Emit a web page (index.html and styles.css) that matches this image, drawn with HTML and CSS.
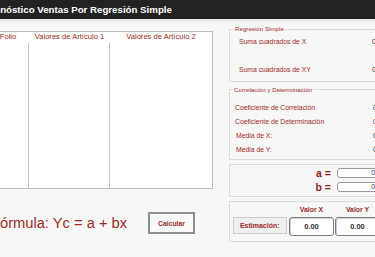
FILE: index.html
```html
<!DOCTYPE html>
<html lang="es">
<head>
<meta charset="utf-8">
<title>Pronóstico Ventas</title>
<link rel="stylesheet" href="styles.css">
</head>
<body>
<div class="page">
  <div class="titlebar">Pronóstico Ventas Por Regresión Simple</div>
  <div class="strip"></div>
  <div class="main">
    <div class="left">
      <div class="table">
        <div class="thead">
          <div>Folio</div>
          <div>Valores de Artículo 1</div>
          <div>Valores de Artículo 2</div>
        </div>
        <div class="tbody">
          <div class="col"></div>
          <div class="col"></div>
          <div class="col last"></div>
        </div>
      </div>
      <div class="formula-row">
        <span class="formula">Fórmula: Yc = a + bx</span>
        <button class="btn-calc">Calcular</button>
      </div>
    </div>
    <div class="right">
      <fieldset class="fs fs1">
        <legend>Regresión Simple</legend>
        <div class="row r1"><span class="lbl">Suma cuadrados de X</span><span class="val">0</span></div>
        <div class="row r2"><span class="lbl">Suma cuadrados de XY</span><span class="val">0</span></div>
      </fieldset>
      <fieldset class="fs fs2">
        <legend>Correlación y Determinación</legend>
        <div class="row c1"><span class="lbl">Coeficiente de Correlación</span><span class="val">0</span></div>
        <div class="row c2"><span class="lbl">Coeficiente de Determinación</span><span class="val">0</span></div>
        <div class="row c3"><span class="lbl media">Media de X:</span><span class="val">0</span></div>
        <div class="row c3"><span class="lbl media">Media de Y:</span><span class="val">0</span></div>
      </fieldset>
      <div class="box box-ab">
        <div class="ab-row"><span class="ab-lbl">a =</span><span class="ab-input">0</span></div>
        <div class="ab-row"><span class="ab-lbl">b =</span><span class="ab-input">0</span></div>
      </div>
      <div class="box box-est">
        <div class="est-head"><span class="sp"></span><span class="vh">Valor X</span><span class="vh">Valor Y</span></div>
        <div class="est-row">
          <button class="btn-est">Estimación:</button>
          <span class="est-input">0.00</span>
          <span class="est-input">0.00</span>
        </div>
      </div>
    </div>
  </div>
</div>
</body>
</html>
```

FILE: styles.css
```css
html, body {
  margin: 0;
  padding: 0;
}
body {
  background: #f7f7f7;
  font-family: "Liberation Sans", Arial, sans-serif;
  width: 375px;
  height: 257px;
  overflow: hidden;
  color: #9c2a2a;
}
.page {
  margin-left: -40px;
  width: 460px;
}
.titlebar {
  height: 19px;
  background: #222222;
  color: #ffffff;
  font-size: 9.7px;
  font-weight: bold;
  line-height: 19px;
  padding-left: 24px;
  white-space: nowrap;
}
.strip {
  height: 3px;
  background: #e9e9e9;
}
.main {
  display: flex;
  align-items: flex-start;
}
.left {
  width: 253px;
  padding-left: 26px;
  box-sizing: border-box;
  flex: none;
}
.table {
  margin-top: 9px;
  height: 158px;
  box-sizing: border-box;
  border: 1px solid #bdbdbd;
  background: #ffffff;
  display: flex;
  flex-direction: column;
}
.thead {
  display: grid;
  grid-template-columns: 42px 81px 1fr;
  height: 11px;
  font-size: 7.6px;
  line-height: 10px;
  text-align: center;
  white-space: nowrap;
}
.tbody {
  flex: 1;
  display: grid;
  grid-template-columns: 42px 81px 1fr;
}
.col {
  border-right: 1px solid #c4c4c4;
}
.col.last {
  border-right: none;
}
.formula-row {
  display: flex;
  align-items: center;
  margin-top: 23px;
  height: 22px;
}
.formula {
  width: 157px;
  margin-left: 5px;
  font-size: 14.7px;
  white-space: nowrap;
  flex: none;
}
.btn-calc {
  width: 47px;
  height: 22px;
  box-sizing: border-box;
  border: 2px solid #8e8e8e;
  background: #fafafa;
  font-family: "Liberation Sans", Arial, sans-serif;
  font-weight: bold;
  font-size: 6.8px;
  color: #9c2a2a;
  padding: 0;
}
.right {
  width: 160px;
  margin-left: 16px;
  padding-top: 3px;
  flex: none;
}
.fs {
  margin: 0;
  border: 1px solid #dcdcdc;
  min-width: 0;
  box-sizing: border-box;
}
.fs legend {
  font-size: 6.2px;
  line-height: 8px;
  padding: 0 1px;
  white-space: nowrap;
}
.fs1 {
  padding: 0 0 3px 9px;
}
.fs1 legend {
  margin-left: -5px;
}
.fs2 {
  margin-top: 4px;
  padding: 6px 0 2px 5px;
}
.fs2 legend {
  margin-left: -2px;
}
.row {
  display: flex;
  align-items: center;
  font-size: 6.8px;
  white-space: nowrap;
}
.r1, .r2 {
  height: 16px;
}
.r2 {
  margin-top: 12.5px;
}
.fs1 .lbl {
  width: 133px;
}
.c1 {
  height: 15px;
}
.c2, .c3 {
  height: 14px;
}
.fs2 .lbl {
  width: 138px;
}
.fs2 .lbl.media {
  width: 137px;
  margin-left: 1px;
}
.val {
  color: #333333;
}
.box {
  border: 1px solid #dcdcdc;
  margin-top: 4px;
  box-sizing: border-box;
}
.box-ab {
  height: 33px;
  padding-top: 3px;
}
.ab-row {
  display: flex;
  align-items: center;
  height: 10px;
}
.ab-row + .ab-row {
  margin-top: 4px;
}
.ab-lbl {
  width: 101px;
  text-align: right;
  font-weight: bold;
  font-size: 10.5px;
  margin-right: 6px;
  white-space: nowrap;
  color: #8e1f1f;
}
.ab-input {
  width: 42px;
  height: 10px;
  box-sizing: border-box;
  border: 1px solid #9a9a9a;
  border-radius: 3px;
  background: #ffffff;
  font-size: 6.8px;
  line-height: 8px;
  text-align: right;
  padding-right: 3px;
  color: #333333;
}
.box-est {
  height: 41px;
  padding-left: 3px;
}
.est-head {
  display: flex;
  height: 15px;
  align-items: center;
  font-weight: bold;
  font-size: 6.9px;
  white-space: nowrap;
}
.est-head .sp {
  width: 56px;
}
.vh {
  width: 45px;
  text-align: center;
}
.vh + .vh {
  margin-left: 1px;
}
.est-row {
  display: flex;
  align-items: flex-start;
}
.btn-est {
  width: 53.5px;
  height: 17px;
  box-sizing: border-box;
  border: 1px solid #cccccc;
  background: #efefef;
  font-family: "Liberation Sans", Arial, sans-serif;
  font-weight: bold;
  font-size: 7px;
  color: #9c2a2a;
  padding: 0;
  margin-right: 2.5px;
}
.est-input {
  width: 45px;
  height: 19px;
  box-sizing: border-box;
  border: 1px solid #7d7d7d;
  border-radius: 3px;
  background: #ffffff;
  box-shadow: inset 1px 1px 0 #cfcfcf;
  font-weight: bold;
  font-size: 7.5px;
  line-height: 17px;
  text-align: center;
  color: #333333;
}
.est-input + .est-input {
  margin-left: 1px;
}
```
